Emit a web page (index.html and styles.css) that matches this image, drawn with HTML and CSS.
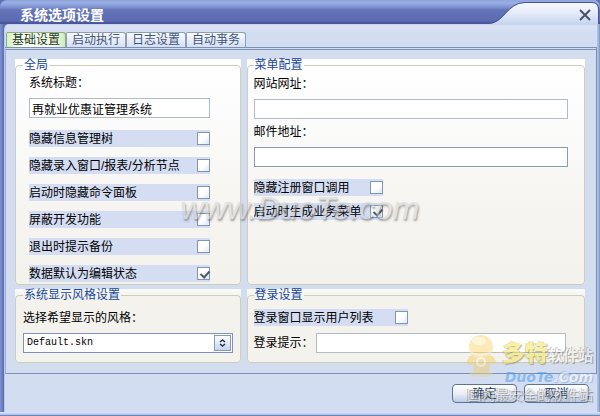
FILE: index.html
```html
<!DOCTYPE html>
<html lang="zh-CN">
<head>
<meta charset="utf-8">
<title>系统选项设置</title>
<link rel="stylesheet" href="styles.css">
</head>
<body>
<div class="window">
  <header class="titlebar">
    <h1 class="title">系统选项设置</h1>
    <div class="corner">
      <svg class="corner-art" width="112" height="24" viewBox="0 0 112 24" aria-hidden="true">
        <defs>
          <linearGradient id="cornerFill" x1="0" y1="0" x2="0" y2="1">
            <stop offset="0" stop-color="#f6f8fe"/>
            <stop offset="0.5" stop-color="#e4eaf8"/>
            <stop offset="1" stop-color="#c6d5ee"/>
          </linearGradient>
        </defs>
        <path d="M0 24C17 24 18 3 37 3H104Q110 3 110 9V24Z" fill="url(#cornerFill)"/>
        <path d="M0 23.500C16 23.500 19 2.500 37 2.500H104Q110.500 2.500 110.500 9V24" fill="none" stroke="#46559b"/>
      </svg>
      <button class="close" type="button" aria-label="关闭">
        <svg width="12" height="12" viewBox="0 0 12 12" aria-hidden="true"><path d="M1 1L11 11M11 1L1 11" stroke="#49536f" stroke-width="2"/></svg>
      </button>
    </div>
  </header>
  <main class="body">
    <nav class="tabs" role="tablist">
      <button class="tab tab-active" type="button" role="tab" aria-selected="true">基础设置</button>
      <button class="tab" type="button" role="tab" aria-selected="false">启动执行</button>
      <button class="tab" type="button" role="tab" aria-selected="false">日志设置</button>
      <button class="tab" type="button" role="tab" aria-selected="false">自动亊务</button>
    </nav>
    <form class="panel">
      <div class="card">
        <fieldset class="group">
          <legend>全局</legend>
          <div class="general">
            <label class="caption" for="sys-title">系统标题：</label>
            <input class="text" id="sys-title" type="text" value="再就业优惠证管理系统">
            <div class="checks">
              <label class="check">隐藏信息管理树<input type="checkbox"></label>
              <label class="check">隐藏录入窗口/报表/分析节点<input type="checkbox"></label>
              <label class="check">启动时隐藏命令面板<input type="checkbox"></label>
              <label class="check">屏蔽开发功能<input type="checkbox"></label>
              <label class="check">退出时提示备份<input type="checkbox"></label>
              <label class="check">数据默认为编辑状态<input type="checkbox" checked></label>
            </div>
          </div>
        </fieldset>
      </div>
      <div class="card">
        <fieldset class="group">
          <legend>菜单配置</legend>
          <div class="menu">
            <label class="caption" for="site-url">网站网址：</label>
            <input class="text" id="site-url" type="text">
            <label class="caption caption-next" for="mail-url">邮件地址：</label>
            <input class="text text-focus" id="mail-url" type="text">
            <div class="checks checks-tight">
              <label class="check">隐藏注册窗口调用<input type="checkbox"></label>
              <label class="check">启动时生成业务菜单<input type="checkbox" checked></label>
            </div>
          </div>
        </fieldset>
      </div>
      <div class="card card-flat">
        <fieldset class="group">
          <legend>系统显示风格设置</legend>
          <div class="style">
            <label class="caption" for="skin">选择希望显示的风格：</label>
            <div class="select">
              <select id="skin"><option>Default.skn</option></select>
              <span class="spinner"><svg width="7" height="8" viewBox="0 0 7 8" aria-hidden="true"><path d="M1 3L3.500 1L6 3M1 5L3.500 7L6 5" fill="none" stroke="#26334f" stroke-width="1.500"/></svg></span>
            </div>
          </div>
        </fieldset>
      </div>
      <div class="card card-flat">
        <fieldset class="group">
          <legend>登录设置</legend>
          <div class="login">
            <label class="check check-login">登录窗口显示用户列表<input type="checkbox"></label>
            <div class="inline">
              <label for="hint">登录提示：</label>
              <input class="text" id="hint" type="text">
            </div>
          </div>
        </fieldset>
      </div>
    </form>
    <footer class="actions">
      <button class="action" type="button">确定</button>
      <button class="action" type="button">取消</button>
    </footer>
  </main>
  <div class="mark-center">www.DuoTe.com</div>
  <div class="brand">
    <svg class="mascot" width="32" height="42" viewBox="0 0 32 42" aria-hidden="true">
      <ellipse cx="16" cy="39" rx="12" ry="3" fill="#e5d39c"/>
      <path d="M7 20Q1 23 2 29Q4 31 8 29L9 37Q15 40 24 37L25 28Q30 31 31 27Q29 20 24 20Z" fill="#f3ce68"/>
      <circle cx="16" cy="12" r="12" fill="#fbd776"/>
      <ellipse cx="14" cy="6" rx="7" ry="4" fill="#ffedb5"/>
      <circle cx="16" cy="27" r="4" fill="none" stroke="#fff6d4" stroke-width="2"/>
      <path d="M5 17Q15 23 26 17" fill="none" stroke="#fff3cc" stroke-width="2"/>
    </svg>
    <div class="brand-name"><span class="brand-main">多特</span><span class="brand-sub">软件站</span></div>
    <div class="brand-url">DuoTe<span>.Com</span></div>
    <div class="brand-line">国内最安全的软件站</div>
  </div>
</div>
</body>
</html>
```
FILE: styles.css
```css
* { box-sizing: border-box; }

body {
  margin: 0;
  background: #5f72b5;
  color: #000;
  font: 12px/14px "Liberation Sans", "Noto Sans CJK SC", sans-serif;
}

button, input, select { font: inherit; color: inherit; }

.window {
  position: relative;
  display: flex;
  flex-direction: column;
  min-height: 100vh;
  padding: 0 3px 4px 4px;
  background:
    linear-gradient(to top, #6e83b8 0 1px, #a8c0ea 1px, #dde7f8 4px, transparent 4px),
    linear-gradient(to right, #8193cf, #596cae 4px, #596cae 50%, #a9c2e6 50%, #a9c2e6 calc(100% - 2px), #7592c2);
  border-radius: 7px 7px 0 0;
  overflow: hidden;
}

.titlebar {
  display: flex;
  justify-content: space-between;
  height: 24px;
  margin: 0 -3px 0 -4px;
  background: linear-gradient(#8fa5dc, #9bafe5 3px, #7e92d2 7px, #6474b8 10px, #5c6bb0 21px, #46549a 23px);
}

.title {
  margin: 0;
  padding: 5px 0 0 20px;
  color: #fff;
  font-size: 14px;
  line-height: 20px;
}

.corner { position: relative; width: 112px; }
.corner-art { display: block; }

.close {
  position: absolute;
  top: 9px;
  right: 9px;
  display: flex;
  padding: 0;
  border: 0;
  background: none;
}

.body {
  flex: 1;
  display: flex;
  flex-direction: column;
  background: linear-gradient(#c3d0ec, #dce3f5 2px, #d3ddf1 8px);
  border-left: 1px solid #b9caec;
  border-radius: 5px 0 0 0;
}

.tabs { display: flex; padding: 8px 0 0 1px; }

.tab {
  width: 60px;
  height: 15px;
  padding: 0;
  border: 1px solid #8f9fb4;
  border-bottom: 0;
  border-radius: 2px 3px 0 0;
  background: linear-gradient(#fafbfe, #d6dff1);
  color: #3f5779;
  line-height: 14px;
}

.tab-active {
  border-color: #8daf80;
  background: linear-gradient(to right, #d3efc0, #fbfef6 12px, #f4fbe9 48px, #cfebba);
  color: #1d3a22;
}

.panel {
  flex: 1;
  display: grid;
  grid-template-columns: 2fr 3fr;
  grid-template-rows: auto auto;
  align-content: start;
  gap: 4px 6px;
  padding: 9px 11px 8px 9px;
  border: 1px solid #7b8fb7;
  border-left-color: #9eb1da;
  border-top: 3px double #7b8fb7;
  background: #d3ddf0;
}

.card {
  display: flex;
  background: linear-gradient(#fff, #fcfcfc 25%, #f5f4f0 70%, #f3f2ec);
  border-radius: 0 0 4px 4px;
}

.card-flat { background: linear-gradient(#fafafa, #f3f2ec 8px); }

.group {
  flex: 1;
  min-width: 0;
  margin: 0;
  padding: 0 7px 2px;
  border: 1px solid #cdcdba;
  border-radius: 4px;
}

.card:nth-child(even) .group { padding-left: 6px; }

legend {
  padding: 0 1px;
  color: #17479c;
  line-height: 12px;
}

.caption { display: block; }
.general { padding: 5px 23px 0 6px; }
.menu { padding: 6px 9px 0 0; }
.style { padding: 10px 0 7px; }
.login { padding: 8px 11px 7px 0; }

.text {
  display: block;
  width: 100%;
  height: 20px;
  margin-top: 8px;
  padding: 0 2px;
  border: 1px solid #b3bbc5;
  border-radius: 0;
  background: #fff;
  outline: 0;
}

.text-focus { border-color: #8a9daf; }
.caption-next { margin-top: 6px; }

.checks {
  display: grid;
  gap: 10px;
  margin-top: 12px;
}

.checks-tight { gap: 7px; width: 129px; }

.check {
  display: flex;
  align-items: center;
  justify-content: space-between;
  height: 17px;
  background: #d4ddf2;
  white-space: nowrap;
}

.check-login { width: 154px; }

.check input {
  appearance: none;
  width: 13px;
  height: 13px;
  margin: 0;
  border: 1px solid #8396b0;
  background: linear-gradient(135deg, #fff 50%, #dfe6f4);
}

.check input:checked::before {
  content: "";
  display: block;
  width: 4px;
  height: 7px;
  margin: 1px 0 0 4px;
  border: solid #4c576d;
  border-width: 0 2px 2px 0;
  transform: rotate(42deg);
}

.select { position: relative; margin-top: 8px; }

.select select {
  appearance: none;
  display: block;
  width: 100%;
  height: 20px;
  padding: 0 20px 0 3px;
  border: 1px solid #7f92be;
  border-radius: 0;
  background: #fff;
  font: 10px/18px "Liberation Mono", monospace;
}

.spinner {
  position: absolute;
  top: 2px;
  right: 2px;
  display: grid;
  place-items: center;
  width: 17px;
  height: 16px;
  border: 1px solid #8799c2;
  background: linear-gradient(#fff, #c5d4ee);
  pointer-events: none;
}

.inline { display: flex; align-items: center; gap: 2px; margin-top: 7px; }
.inline label { flex: none; }
.inline .text { flex: 1; min-width: 0; margin: 0; }

.actions {
  display: flex;
  justify-content: flex-end;
  gap: 7px;
  padding: 10px 8px 9px;
}

.action {
  width: 65px;
  height: 19px;
  padding: 0;
  border: 1px solid #5d7296;
  border-radius: 4px;
  background: linear-gradient(#fff, #e9eef8 50%, #bccbe5);
  color: #203b63;
  line-height: 16px;
}

.mark-center {
  position: absolute;
  left: 50%;
  top: 50%;
  translate: -50% -50%;
  color: #d0d0d0;
  font: italic 32px/32px "Liberation Sans", sans-serif;
  text-shadow: 1px 2px 2px #555;
  opacity: 0.5;
  pointer-events: none;
}

.brand {
  position: absolute;
  right: 7px;
  bottom: 12px;
  width: 126px;
  opacity: 0.5;
  pointer-events: none;
  text-align: right;
  white-space: nowrap;
}

.mascot { position: absolute; left: -2px; top: -6px; }
.brand-name { line-height: 24px; }

.brand-main {
  color: #f3e34d;
  font-size: 23px;
  font-weight: 900;
  text-shadow: 1px 1px 1px #6d6d40, -1px 0 0 #b5b58c;
}

.brand-sub {
  color: #f4f4f4;
  font-size: 15px;
  font-weight: bold;
  text-shadow: 1px 1px 1px #555, -1px -1px 0 #999;
}

.brand-url {
  color: #3f98ec;
  font: italic bold 14px/17px "DejaVu Sans", sans-serif;
}

.brand-url span { color: #fff; text-shadow: 1px 1px 1px #6b9cd6, -1px -1px 0 #8ab5e6; }

.brand-line {
  color: #e2e2e2;
  font-size: 14px;
  line-height: 18px;
  text-shadow: 1px 1px 1px #444, -1px 0 0 #888;
}
```
